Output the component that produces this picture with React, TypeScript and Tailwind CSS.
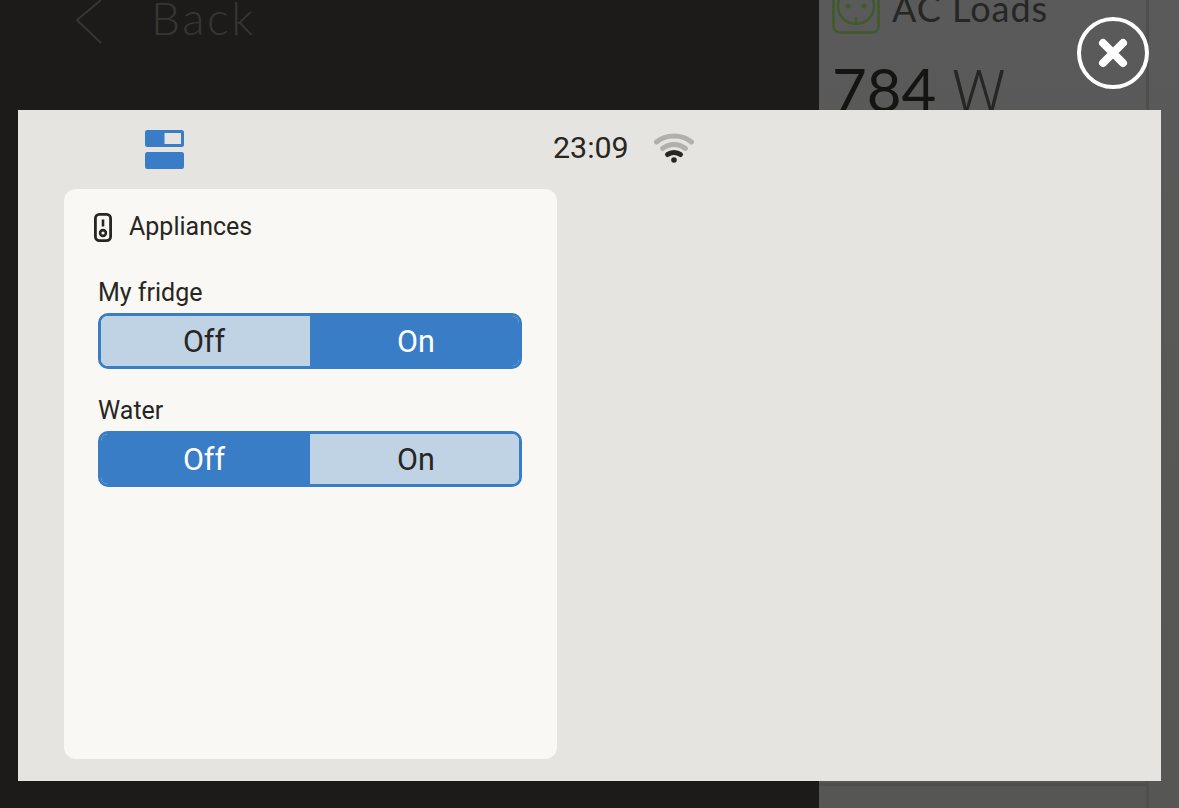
import type { ReactNode } from "react";

function Toggle({ label, value }: { label: string; value: "Off" | "On" }) {
  const seg = (name: "Off" | "On") => {
    const active = name === value;
    const side = name === "Off" ? "pr-[3px]" : "pl-[3px]";
    return (
      <div
        className={
          active
            ? `flex-1 flex items-center justify-center pt-[2px] bg-[#387dc5] text-white ${side}`
            : `flex-1 flex items-center justify-center pt-[2px] bg-[#c0d3e5] text-[#272622] ${side}`
        }
      >
        {name}
      </div>
    );
  };

  return (
    <div>
      <div className="text-[25px] leading-[34px] text-[#272622] mb-[3px]">{label}</div>
      <div className="flex h-[56px] w-[424px] rounded-[10px] border-[3px] border-[#387dc5] overflow-hidden text-[30.5px]">
        {seg("Off")}
        {seg("On")}
      </div>
    </div>
  );
}

function TopLeftIcon() {
  return (
    <svg width="39" height="39" viewBox="0 0 39 39">
      <rect x="0" y="0" width="39" height="17" rx="2.5" fill="#387dc5" />
      <rect x="19.5" y="3" width="16.5" height="11" fill="#e5e4e0" />
      <rect x="0" y="22" width="39" height="17" rx="2.5" fill="#387dc5" />
    </svg>
  );
}

function ApplianceIcon() {
  return (
    <svg width="18" height="29" viewBox="0 0 18 29" fill="none" stroke="#272622">
      <rect x="1.4" y="1.4" width="15.2" height="26.2" rx="4" strokeWidth="2.8" />
      <path d="M9 6.5v7" strokeWidth="2.6" />
      <circle cx="9" cy="20" r="2.9" strokeWidth="2.6" />
    </svg>
  );
}

function WifiIcon() {
  return (
    <svg width="40" height="30" viewBox="0 0 40 30" fill="none" strokeLinecap="round" className="-mt-[3px]">
      <path d="M2.5 9C12 1 28 1 37.5 9" stroke="#b1b0ab" strokeWidth="5" />
      <path d="M8.5 15.5C15 10 25 10 31.5 15.5" stroke="#b1b0ab" strokeWidth="5" />
      <path d="M13.5 21.5C17 18.8 23 18.8 26.5 21.5" stroke="#272622" strokeWidth="5" />
      <circle cx="20" cy="27" r="2.8" fill="#272622" />
    </svg>
  );
}

function SocketIcon() {
  return (
    <svg width="48" height="48" viewBox="0 0 48 48" fill="none" stroke="#3f5a2c" strokeWidth="2.5">
      <rect x="1.5" y="1.5" width="45" height="45" rx="6" />
      <circle cx="24" cy="20" r="18" />
      <circle cx="16" cy="20" r="2.5" fill="#3f5a2c" stroke="none" />
      <circle cx="32" cy="20" r="2.5" fill="#3f5a2c" stroke="none" />
      <path d="M24 31v6" />
    </svg>
  );
}

function Backdrop({ children }: { children: ReactNode }) {
  return (
    <div className="relative w-[1179px] h-[808px] overflow-hidden bg-[#1c1b19]" style={{ fontFamily: "Roboto, sans-serif" }}>
      {children}
    </div>
  );
}

export default function App() {
  return (
    <Backdrop>
      {/* Dimmed page behind the dialog */}
      <div className="flex h-full" style={{ fontFamily: "Lato, sans-serif" }}>
        <div className="w-[819px] pl-[75px]">
          <div className="flex items-center h-[44px] text-[#363532] text-[46px] tracking-[2.5px] font-light">
            <svg width="29" height="46" viewBox="0 0 29 46" fill="none" stroke="#363532" strokeWidth="2" className="mr-[47px]">
              <path d="M26 1L2 21l24 23" />
            </svg>
            <span className="-mt-[10px]">Back</span>
          </div>
        </div>
        <div className="flex flex-1 bg-gradient-to-b from-[#5a5a5a] to-[#565654]">
          <div className="flex flex-col w-[330px] border-r-[3px] border-[#4f4f4d] pl-[13px] h-full">
            <div className="flex items-center h-[33px] overflow-visible">
              <div className="-mt-[13px] mr-[12px]">
                <SocketIcon />
              </div>
              <span className="text-[36px] tracking-[1px] text-[#262624] -mt-[18px]">AC Loads</span>
            </div>
            <div className="text-[60px] leading-[60px] mt-[26px] text-[#141412]">
              784{" "}
              <span className="text-[#262624]" style={{ fontFamily: "Roboto, sans-serif", fontWeight: 300 }}>
                W
              </span>
            </div>
            {/* bottom edge of the tile under the dialog */}
            <div className="mt-auto mb-[22px] -ml-[13px] h-[3px] bg-[#4f4f4d]" />
          </div>
        </div>
      </div>

      {/* Close button */}
      <button className="absolute left-[1077px] top-[17px] w-[72px] h-[72px] rounded-full border-[4px] border-white flex items-center justify-center">
        <svg width="30" height="30" viewBox="0 0 30 30" fill="none" stroke="#fff" strokeWidth="8" strokeLinecap="round">
          <path d="M5 5l20 20M25 5L5 25" />
        </svg>
      </button>

      {/* Dialog */}
      <div className="absolute left-[18px] top-[110px] w-[1143px] h-[671px] bg-[#e5e4e0] flex flex-col">
        <div className="flex items-center h-[79px] text-[#272622]">
          <div className="ml-[127px]">
            <TopLeftIcon />
          </div>
          <span className="ml-[369px] text-[30.4px] leading-none -mt-[2px]">23:09</span>
          <div className="ml-[25px]">
            <WifiIcon />
          </div>
        </div>
        <div className="ml-[46px] w-[493px] h-[570px] bg-[#f9f8f4] rounded-[12px] flex flex-col">
          <div className="flex items-center h-[76px] pl-[30px] mb-[11px] text-[25px] text-[#272622]">
            <ApplianceIcon />
            <span className="ml-[17px]">Appliances</span>
          </div>
          <div className="flex flex-col gap-[25px] pl-[34px]">
            <Toggle label="My fridge" value="On" />
            <Toggle label="Water" value="Off" />
          </div>
        </div>
      </div>
    </Backdrop>
  );
}
